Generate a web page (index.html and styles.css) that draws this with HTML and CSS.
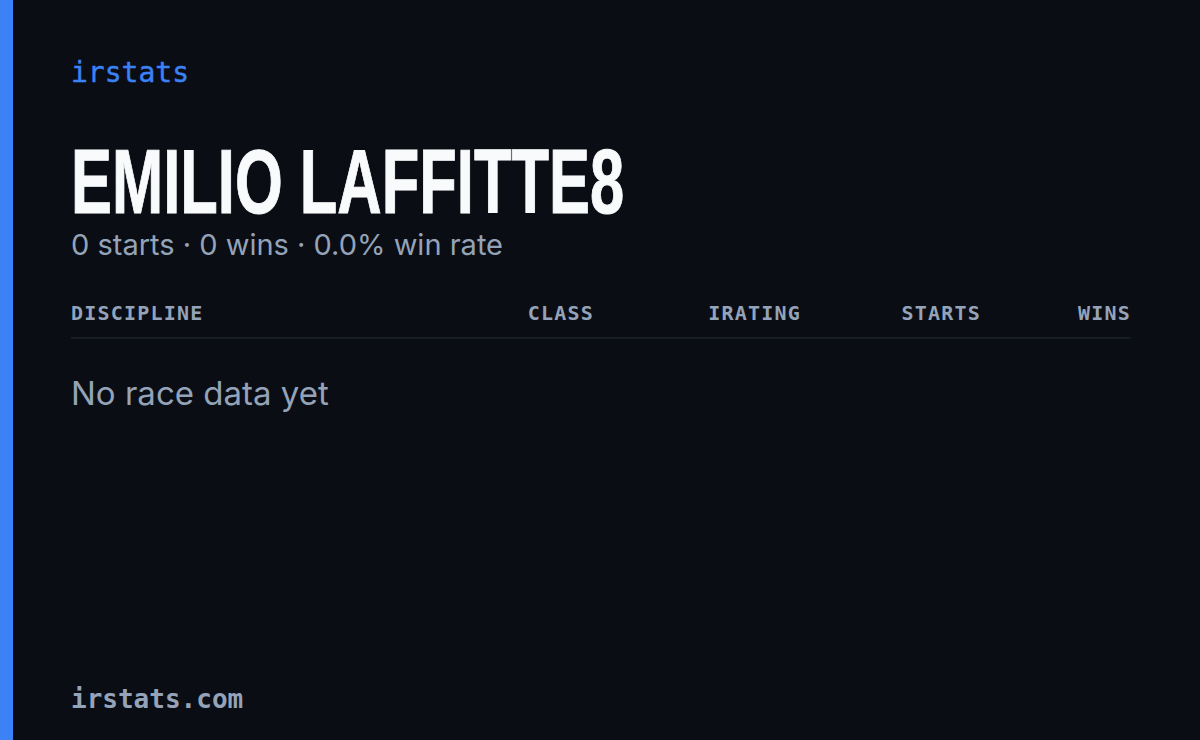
FILE: index.html
```html
<!DOCTYPE html>
<html>
<head>
  <title>Emilio Laffitte8 - irstats</title>
  <link rel="stylesheet" href="styles.css">
</head>
<body>
  <div class="card">
    <div class="brand">irstats</div>

    <!-- Nama driver dan ringkasan -->
    <div class="driver">
      <h1 class="name"><span>EMILIO LAFFITTE8</span></h1>
      <p class="summary">0 starts · 0 wins · 0.0% win rate</p>
    </div>

    <!-- Tabel lisensi -->
    <div class="stats">
      <div class="row head">
        <div class="col-left">DISCIPLINE</div>
        <div>CLASS</div>
        <div>IRATING</div>
        <div>STARTS</div>
        <div>WINS</div>
      </div>
      <p class="empty">No race data yet</p>
    </div>

    <div class="footer">irstats.com</div>
  </div>
</body>
</html>
```

FILE: styles.css
```css
/* layout dasar */
html, body {
  margin: 0;
  padding: 0;
  background-color: #0a0d14;
}

.card {
  box-sizing: border-box;
  height: 740px;
  display: flex;
  flex-direction: column;
  border-left: 13px solid #3b82f6;
  padding: 54px 69px 24px 58px;
  color: #94a3b8;
  font-family: "Inter", "Open Sans", sans-serif;
}

/* logo di atas */
.brand {
  font-family: "DejaVu Sans Mono", "Liberation Mono", monospace;
  font-size: 28px;
  line-height: 38px;
  color: #3b82f6;
  -webkit-text-stroke: 0.4px #3b82f6;
}

/* nama driver */
.driver {
  margin-top: 45px;
}

.name {
  margin: 0;
  font-family: "Liberation Sans", sans-serif;
  font-weight: bold;
  font-size: 90px;
  line-height: 90px;
  color: #f8fafc;
  white-space: nowrap;
}

.name span {
  display: inline-block;
  transform: scaleX(0.683);
  transform-origin: left center;
  -webkit-text-stroke: 1px #f8fafc;
}

.summary {
  margin: 0;
  font-size: 29px;
  line-height: 36px;
}

/* tabel */
.stats {
  margin-top: 36px;
}

.row {
  display: grid;
  grid-template-columns: 1fr 140px 207px 180px 150px;
  text-align: right;
}

.row .col-left {
  text-align: left;
}

.head {
  font-family: "DejaVu Sans Mono", "Liberation Mono", monospace;
  font-weight: bold;
  font-size: 20px;
  letter-spacing: 1.2px;
  line-height: 28px;
  padding-bottom: 10px;
  border-bottom: 2px solid #161b26;
}

.empty {
  margin: 34px 0 0;
  font-size: 33px;
  line-height: 40px;
}

/* footer */
.footer {
  margin-top: auto;
  font-family: "DejaVu Sans Mono", "Liberation Mono", monospace;
  font-weight: bold;
  font-size: 26px;
  line-height: 34px;
}
```
